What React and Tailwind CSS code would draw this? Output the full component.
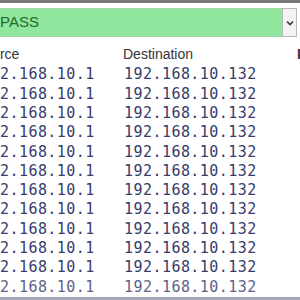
import React from "react";

const rows = Array.from({ length: 12 }, () => ({
  source: "192.168.10.1",
  destination: "192.168.10.132",
}));

export default function App() {
  return (
    <div className="w-[300px] h-[300px] overflow-hidden bg-white flex flex-col font-['Liberation_Sans',Arial,sans-serif]">
      {/* top frame edge */}
      <div className="h-[3px] bg-[#7a7a7a]" />
      <div className="h-[5px]" />

      {/* action dropdown */}
      <div className="flex h-[29px]">
        <div className="flex-1 bg-[#8fe69c] border-y border-[#9fd6a8] flex items-center">
          <span className="text-[15px] font-medium text-[#1f6a2c]">PASS</span>
        </div>
        <div className="w-[15px] bg-[#f3f3f3] border border-[#b9b9b9] flex items-center justify-center">
          <svg width="8" height="6" viewBox="0 0 8 6">
            <path d="M1 1.5 L4 4.5 L7 1.5" fill="none" stroke="#3a3a3a" strokeWidth="1.6" />
          </svg>
        </div>
        <div className="w-[3px]" />
      </div>

      {/* table */}
      <div className="flex-1 flex flex-col mt-[7px] ml-[-25px]">
        <div className="flex h-[21px] items-center text-[14px] text-[#353535] shrink-0">
          <div className="w-[148px] shrink-0">Source</div>
          <div className="w-[174px] shrink-0">Destination</div>
          <div className="shrink-0 font-semibold">Protocol</div>
        </div>
        <div className="flex flex-col font-['DejaVu_Sans_Mono','Liberation_Mono',monospace] text-[15px] tracking-[0.45px]">
          {rows.map((r, i) => (
            <div
              key={i}
              className={`flex h-[19.3px] items-center ${
                i === rows.length - 1 ? "text-[#5d6288]" : "text-[#363c6b]"
              }`}
            >
              <div className="w-[148px] shrink-0 pl-[6px]">{r.source}</div>
              <div className="w-[174px] shrink-0 pl-[1px]">{r.destination}</div>
            </div>
          ))}
        </div>
      </div>

      {/* bottom frame edge */}
      <div className="h-[3px] bg-[#a3a6b8] shrink-0" />
    </div>
  );
}
